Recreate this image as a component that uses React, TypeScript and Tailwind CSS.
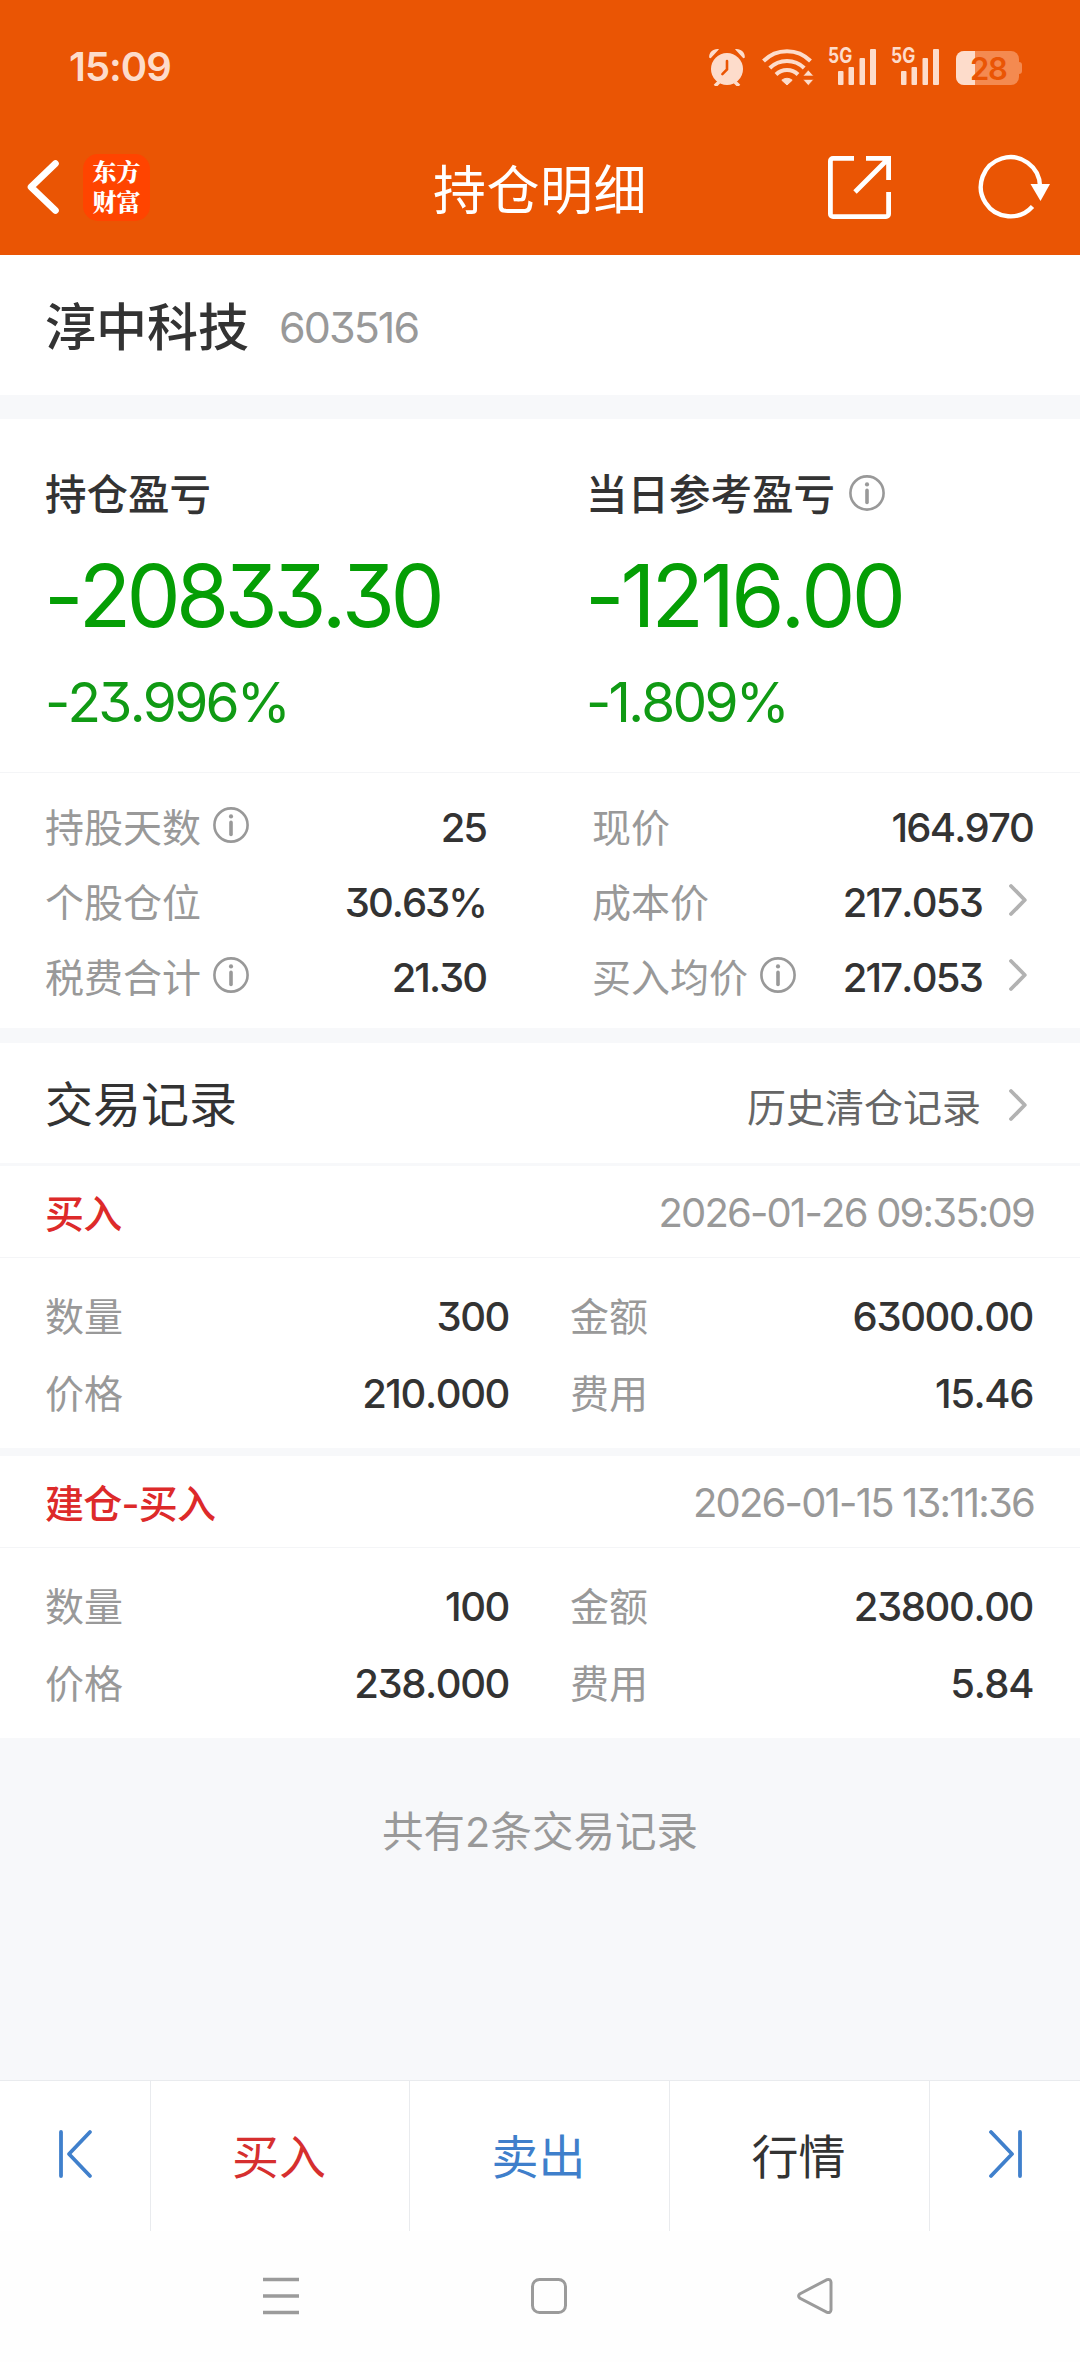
const SUMMARY = [
  { title: "持仓盈亏", amount: "-20833.30", percent: "-23.996%", info: false, tracking: "tracking-[-0.055em]" },
  { title: "当日参考盈亏", amount: "-1216.00", percent: "-1.809%", info: true, tracking: "tracking-[-0.046em]" },
];

const DETAILS_LEFT = [
  { label: "持股天数", value: "25", info: true },
  { label: "个股仓位", value: "30.63%", info: false },
  { label: "税费合计", value: "21.30", info: true },
];

const DETAILS_RIGHT = [
  { label: "现价", value: "164.970", info: false, link: false },
  { label: "成本价", value: "217.053", info: false, link: true },
  { label: "买入均价", value: "217.053", info: true, link: true },
];

const RECORDS = [
  { type: "买入", time: "2026-01-26 09:35:09", count: "300", amount: "63000.00", price: "210.000", fee: "15.46" },
  { type: "建仓-买入", time: "2026-01-15 13:11:36", count: "100", amount: "23800.00", price: "238.000", fee: "5.84" },
];

function InfoIcon() {
  return (
    <svg width="36" height="36" viewBox="0 0 36 36" fill="none" className="shrink-0">
      <circle cx="18" cy="18" r="16.6" stroke="#999999" strokeWidth="2.6" />
      <circle cx="18" cy="9.4" r="2.1" fill="#999999" />
      <path d="M18 15.4v12" stroke="#999999" strokeWidth="3.6" strokeLinecap="round" />
    </svg>
  );
}

function Chevron() {
  return (
    <svg width="18" height="34" viewBox="0 0 18 34" fill="none" className="shrink-0">
      <path d="M2 3l13.8 14L2 31" stroke="#b2b2b2" strokeWidth="3.8" strokeLinecap="round" strokeLinejoin="round" />
    </svg>
  );
}

function AlarmIcon() {
  return (
    <svg width="38" height="38" viewBox="0 0 38 38" fill="none">
      <path d="M11 34l-4 4M27 34l4 4" stroke="#fddccb" strokeWidth="3.6" />
      <path d="M1.2 9.6C.6 4.6 5.5.2 11 1.2L3.4 9.6c-.6.7-1.5.7-2.2 0zM36.8 9.6C37.4 4.6 32.5.2 27 1.2l7.6 8.4c.6.7 1.5.7 2.2 0z" fill="#fddccb" />
      <circle cx="19" cy="21" r="16" fill="#fddccb" />
      <path d="M19 13v8.5l-4.6 4.6" stroke="#ea5504" strokeWidth="2.6" strokeLinecap="round" />
    </svg>
  );
}

function WifiIcon() {
  return (
    <svg width="52" height="38" viewBox="0 0 52 38" fill="none">
      <path d="M1.5 13a33 33 0 0 1 47 0M7.8 20a24.5 24.5 0 0 1 34.4 0M14 26.5a16 16 0 0 1 22 0" stroke="#fddccb" strokeWidth="4" />
      <path d="M19.8 32.200a8 8 0 0 1 10.400 0L25 37z" fill="#fddccb" stroke="#fddccb" />
      <path d="M41 28l5.3-6 5.3 6zM41 31.5l5.3 6 5.3-6z" fill="#fddccb" stroke="#ea5504" strokeWidth=".6" />
    </svg>
  );
}

function SignalIcon() {
  return (
    <div className="relative h-[38px] w-[49px]">
      <span className="absolute -top-px left-0 origin-left scale-x-[0.83] text-[21px] leading-[17px] font-bold text-[#fddccb]">5G</span>
      <svg width="49" height="38" viewBox="0 0 49 38" fill="#fddccb">
        <rect x="10" y="23" width="5.5" height="14" rx="1" />
        <rect x="20.5" y="19" width="5.5" height="18" rx="1" />
        <rect x="31.5" y="10" width="5.5" height="27" rx="1" />
        <rect x="42" y="1" width="6" height="36" rx="1" />
      </svg>
    </div>
  );
}

function Battery() {
  return (
    <div className="flex items-center">
      <div className="relative h-[34px] w-[63px] rounded-[8px] bg-[#f48a50]">
        <div className="h-full w-[19px] rounded-l-[8px] bg-[#fddccb]" />
        <span className="absolute inset-0 pl-[14px] text-[31px] leading-[36px] font-semibold tracking-[-0.04em] text-[#ea5504]">28</span>
      </div>
      <div className="h-[12px] w-[3px] rounded-r-[3px] bg-[#f48a50]" />
    </div>
  );
}

function Header() {
  return (
    <header className="h-[255px] bg-[#ea5504]">
      <div className="flex h-[133px] items-center pr-[58px] pl-[69px]">
        <span className="text-[40px] font-semibold tracking-[-0.025em] text-[#fddccb]">15:09</span>
        <div className="ml-auto flex items-center">
          <AlarmIcon />
          <div className="ml-[16px]"><WifiIcon /></div>
          <div className="ml-[14px]"><SignalIcon /></div>
          <div className="ml-[14px]"><SignalIcon /></div>
          <div className="ml-[16px] pt-[3px]"><Battery /></div>
        </div>
      </div>
      <div className="relative flex h-[108px] items-center pr-[29px] pl-[26px]">
        <svg width="34" height="56" viewBox="0 0 34 56" fill="none">
          <path d="M29.5 4.5L5 28l24.5 23.5" stroke="#fff" strokeWidth="6.6" strokeLinecap="round" strokeLinejoin="round" />
        </svg>
        <div className="ml-[23px] h-[67px] w-[67px] rounded-[15px] bg-[#ff4400] pt-[2px] text-center font-['Noto_Serif_CJK_SC','Noto_Sans_CJK_SC',serif] text-[24px] leading-[30px] font-black text-white">
          东方
          <br />
          财富
        </div>
        <h1 className="absolute inset-x-0 top-[4px] text-center text-[53px] leading-[108px] tracking-[0.01em] text-white">持仓明细</h1>
        <svg className="ml-auto" width="63" height="63" viewBox="0 0 63 63" fill="none" stroke="#fff" strokeWidth="4.8">
          <path d="M26 2.4H5A2.6 2.6 0 0 0 2.4 5v53A2.6 2.6 0 0 0 5 60.6h53a2.6 2.6 0 0 0 2.6-2.6V36M38 2.4h22.6V24M60 3L27 36" />
        </svg>
        <svg className="ml-[87px]" width="73" height="66" viewBox="0 0 73 66" fill="none">
          <path d="M54.5 52.5A29.6 29.6 0 1 1 62 32" stroke="#fff" strokeWidth="4.4" />
          <path d="M52.5 30h19.5L62.5 47z" fill="#fff" />
        </svg>
      </div>
    </header>
  );
}

function RecordCard({ record }: { record: (typeof RECORDS)[number] }) {
  const rows = [
    ["数量", record.count, "金额", record.amount],
    ["价格", record.price, "费用", record.fee],
  ];
  return (
    <div className="h-[282px] bg-white">
      <div className="flex h-[92px] items-center justify-between border-b border-[#f4f5f7] pt-[3px] pr-[46px] pl-[45px]">
        <span className="text-[39px] font-medium tracking-[-0.02em] text-[#dd2a2a]">{record.type}</span>
        <span className="text-[40px] tracking-[-0.045em] text-[#999999]">{record.time}</span>
      </div>
      <div className="pt-[20px]">
        {rows.map(([a, av, b, bv]) => (
          <div key={a} className="flex h-[77px] items-center pr-[47px] pl-[45px] text-[39px] text-[#999999]">
            <span>{a}</span>
            <span className="ml-auto text-[40px] font-medium tracking-[-0.035em] text-[#333333]">{av}</span>
            <div className="ml-[61px] flex w-[463px] items-center justify-between">
              <span>{b}</span>
              <span className="text-[40px] font-medium tracking-[-0.035em] text-[#333333]">{bv}</span>
            </div>
          </div>
        ))}
      </div>
    </div>
  );
}

export default function App() {
  return (
    <div className="flex h-[2362px] w-[1080px] flex-col overflow-hidden bg-[#f7f8fa] font-['Inter','Noto_Sans_CJK_SC',sans-serif] leading-none whitespace-nowrap text-[#333333] [font-feature-settings:'cv09'] [font-kerning:none]">
      <Header />

      <section className="flex h-[140px] items-center bg-white pt-[5px] pl-[45px]">
        <span className="text-[51px] font-medium">淳中科技</span>
        <span className="ml-[30px] text-[43px] tracking-[-0.045em] text-[#999999]">603516</span>
      </section>

      {/* profit and loss */}
      <section className="mt-[24px] grid h-[354px] grid-cols-[541px_1fr] border-b border-[#f4f5f7] bg-white pt-[52px] pl-[45px]">
        {SUMMARY.map((s) => (
          <div key={s.title}>
            <div className="flex h-[50px] items-center gap-[14px] text-[41.5px] font-medium">
              {s.title}
              {s.info && <div className="pb-[7px]"><InfoIcon /></div>}
            </div>
            <div className={`mt-[25px] -ml-px h-[100px] text-[86px] leading-[100px] text-[#059e05] ${s.tracking}`}>{s.amount}</div>
            <div className="mt-[25px] h-[62px] text-[55px] leading-[62px] tracking-[-0.05em] text-[#109a14]">{s.percent}</div>
          </div>
        ))}
      </section>

      <section className="flex h-[255px] bg-white pt-[17px] pr-[47px] pl-[45px] text-[39px] text-[#999999]">
        <div className="w-[441px]">
          {DETAILS_LEFT.map((d) => (
            <div key={d.label} className="flex h-[75px] items-center">
              <span>{d.label}</span>
              {d.info && <div className="ml-[12px] pb-[5px]"><InfoIcon /></div>}
              <span className="ml-auto text-[40px] font-medium tracking-[-0.05em] text-[#333333]">{d.value}</span>
            </div>
          ))}
        </div>
        <div className="ml-[106px] flex-1">
          {DETAILS_RIGHT.map((d) => (
            <div key={d.label} className="flex h-[75px] items-center">
              <span>{d.label}</span>
              {d.info && <div className="ml-[12px] pb-[5px]"><InfoIcon /></div>}
              <span className="ml-auto text-[40px] font-medium tracking-[-0.045em] text-[#333333]">{d.value}</span>
              {d.link && <div className="mr-[6px] ml-[27px] pb-[5px]"><Chevron /></div>}
            </div>
          ))}
        </div>
      </section>

      {/* trade records */}
      <section className="mt-[15px] flex h-[120px] items-center justify-between bg-white pt-[3px] pr-[53px] pl-[45px]">
        <h2 className="text-[48px]">交易记录</h2>
        <div className="flex items-center pt-[5px] text-[39px] text-[#666666]">
          历史清仓记录
          <div className="ml-[28px] pb-[5px]"><Chevron /></div>
        </div>
      </section>
      <div className="mt-[3px] flex flex-col gap-[8px]">
        {RECORDS.map((r) => (
          <RecordCard key={r.time} record={r} />
        ))}
      </div>
      <p className="mt-[66px] text-center text-[41.5px] leading-[56px] text-[#999999]">共有2条交易记录</p>

      {/* bottom actions */}
      <nav className="mt-auto grid h-[151px] grid-cols-[151px_259px_260px_260px_150px] divide-x divide-[#e9ebee] border-t border-[#e9ebee] bg-white text-center text-[47px] leading-[152px]">
        <div className="flex pt-[48px] pl-[58px]">
          <svg width="36" height="50" viewBox="0 0 36 50" fill="none" stroke="#4080cc" strokeWidth="3.8" strokeLinecap="round" strokeLinejoin="round">
            <path d="M3 3v44M32 3L11 25l21 22" />
          </svg>
        </div>
        <div className="pr-[2px] text-[#d62f2f]">买入</div>
        <div className="pr-[2px] text-[#3f7fcb]">卖出</div>
        <div className="pr-[2px]">行情</div>
        <div className="flex pt-[48px] pl-[58px]">
          <svg width="36" height="50" viewBox="0 0 36 50" fill="none" stroke="#4080cc" strokeWidth="3.8" strokeLinecap="round" strokeLinejoin="round">
            <path d="M32 3v44M3 3l21 22L3 47" />
          </svg>
        </div>
      </nav>
      <div className="flex h-[131px] items-start bg-[#fefefe] pt-[46px] pl-[263px]">
        <svg width="36" height="38" viewBox="0 0 36 38" stroke="#9b9b9b" strokeWidth="3.4">
          <path d="M0 2.5h36M0 19h36M0 35.5h36" />
        </svg>
        <svg className="ml-[232px]" width="36" height="38" viewBox="0 0 36 38" fill="none" stroke="#9b9b9b" strokeWidth="3">
          <rect x="1.5" y="2.5" width="33" height="33" rx="7" />
        </svg>
        <svg className="ml-[230px]" width="36" height="38" viewBox="0 0 36 38" fill="none" stroke="#9b9b9b" strokeWidth="3">
          <path d="M2.6 17L30 2.6q3.6-1 4 2.6v27.6q-.4 3.6-4 2.6L2.6 21q-2-2 0-4z" />
        </svg>
      </div>
    </div>
  );
}
